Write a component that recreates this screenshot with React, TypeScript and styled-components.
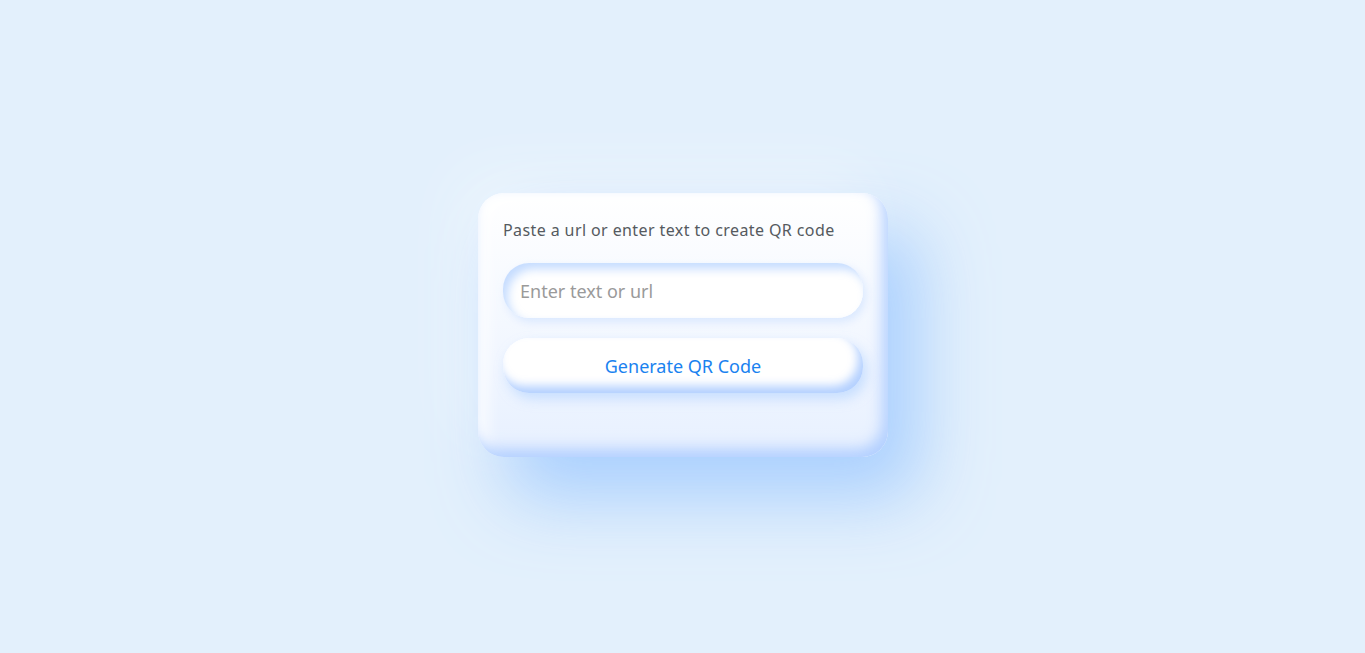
import React, { useState } from "react";
import styled, { createGlobalStyle } from "styled-components";

const GlobalStyle = createGlobalStyle`
  html, body {
    margin: 0;
    padding: 0;
    background: #e3f0fc;
  }
  body {
    font-family: "Noto Sans", "Open Sans", sans-serif;
  }
`;

const Page = styled.div`
  height: 653px;
  display: flex;
  align-items: center;
  justify-content: center;
  padding-left: 1px;
  box-sizing: border-box;
`;

const Card = styled.div`
  width: 410px;
  box-sizing: border-box;
  padding: 25px 25px 64px;
  margin-top: -3px;
  border-radius: 26px;
  background: linear-gradient(180deg, #ffffff 0%, #f4f8ff 50%, #e7f0ff 100%);
  box-shadow:
    inset -6px -8px 14px rgba(160, 196, 255, 0.75),
    inset 8px 8px 16px #ffffff,
    30px 40px 70px rgba(150, 196, 255, 0.75),
    -20px -20px 60px rgba(255, 255, 255, 0.4);
  display: flex;
  flex-direction: column;
`;

const Label = styled.p`
  margin: 0;
  font-size: 16px;
  line-height: 24px;
  letter-spacing: 0.4px;
  color: #555a60;
`;

const Input = styled.input`
  margin-top: 21px;
  height: 55px;
  width: 100%;
  box-sizing: border-box;
  border: none;
  outline: none;
  border-radius: 26px;
  padding: 0 17px;
  font-family: inherit;
  font-size: 18px;
  color: #444;
  background: #ffffff;
  box-shadow:
    inset 5px 6px 10px rgba(178, 208, 255, 0.75),
    inset -4px -4px 8px #ffffff,
    3px 4px 8px rgba(200, 222, 255, 0.6);

  &::placeholder {
    color: #9a9a9a;
  }
`;

const Button = styled.button`
  margin-top: 20px;
  height: 55px;
  width: 100%;
  border: none;
  border-radius: 26px;
  cursor: pointer;
  font-family: inherit;
  font-size: 18px;
  color: #1a82f0;
  background: #ffffff;
  box-shadow:
    inset -5px -7px 10px rgba(160, 196, 255, 0.8),
    inset 5px 5px 8px #ffffff,
    4px 6px 12px rgba(170, 205, 255, 0.55);
`;

const App = () => {
  const [value, setValue] = useState("");

  return (
    <>
      <GlobalStyle />
      <Page>
        <Card>
          <Label>Paste a url or enter text to create QR code</Label>
          <Input
            type="text"
            placeholder="Enter text or url"
            value={value}
            onChange={(e) => setValue(e.target.value)}
          />
          <Button>Generate QR Code</Button>
        </Card>
      </Page>
    </>
  );
};

export default App;
